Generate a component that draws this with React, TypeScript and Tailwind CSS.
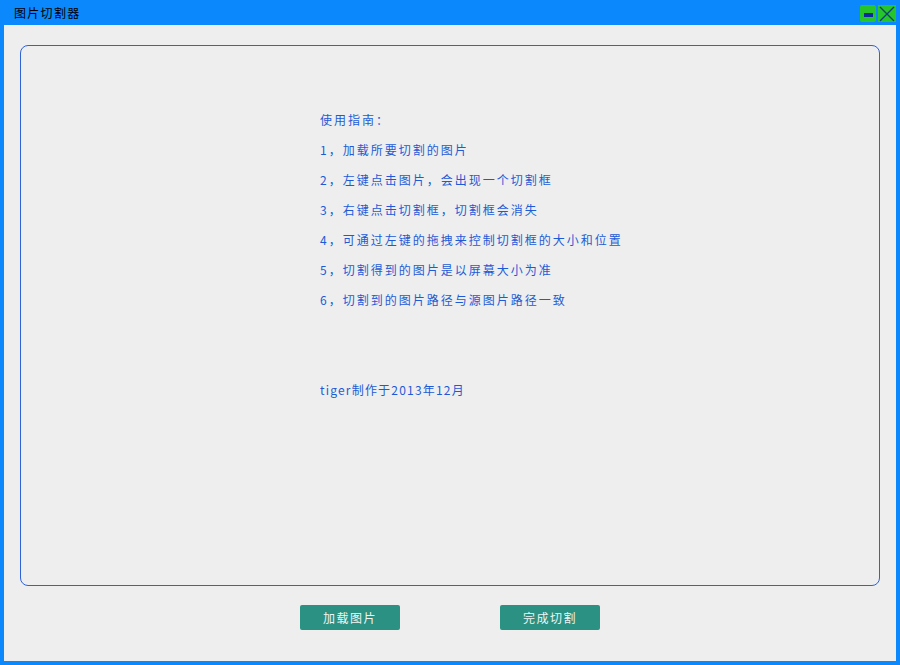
// Image cutter window: blue frame, guide text panel, two action buttons.

const font = { fontFamily: '"Noto Sans CJK SC", "DejaVu Sans", sans-serif' };

const steps = [
  "1，加载所要切割的图片",
  "2，左键点击图片，会出现一个切割框",
  "3，右键点击切割框，切割框会消失",
  "4，可通过左键的拖拽来控制切割框的大小和位置",
  "5，切割得到的图片是以屏幕大小为准",
  "6，切割到的图片路径与源图片路径一致",
];

export default function App() {
  return (
    <div className="flex h-[665px] w-[900px] flex-col bg-[#0a88fc]" style={font}>
      <div className="flex h-[25px] items-center pl-[14px] pr-[4px]">
        <span className="text-[12px] leading-none tracking-[1.3px] text-black">图片切割器</span>
        <div className="ml-auto flex items-center gap-[2px] pt-[2px]">
          <button className="flex h-[17px] w-[16px] items-center justify-center rounded-[2px] bg-[#26c62a]">
            <span className="mt-[3px] h-[4px] w-[9px] bg-[#0b2a9a]" />
          </button>
          <button className="flex h-[17px] w-[18px] items-center justify-center bg-[#26c62a]">
            <svg width="16" height="16" viewBox="0 0 16 16">
              <path d="M1 1L15 15M15 1L1 15" stroke="#0b3f7a" strokeWidth="1.3" />
            </svg>
          </button>
        </div>
      </div>
      <div className="mx-[4px] mb-[4px] flex flex-1 flex-col bg-[#eeeeee] px-[16px] pt-[20px]">
        <div className="flex h-[541px] flex-col rounded-[8px] border border-[#2d62d8] pl-[299px] pt-[66px] text-[12px] tracking-[2px] text-[#1d5bd6]">
          <p className="h-[30px] leading-[16px]">使用指南：</p>
          {steps.map((s) => (
            <p key={s} className="h-[30px] leading-[16px]">
              {s}
            </p>
          ))}
          <p className="mt-[60px] leading-[16px] tracking-[1.2px]">tiger制作于2013年12月</p>
        </div>
        <div className="mt-[19px] flex justify-center gap-[100px]">
          <button className="h-[25px] w-[100px] rounded-[2px] bg-[#2a9183] text-[12px] tracking-[1.5px] text-[#eef6f4]">
            加载图片
          </button>
          <button className="h-[25px] w-[100px] rounded-[2px] bg-[#2a9183] text-[12px] tracking-[1.5px] text-[#eef6f4]">
            完成切割
          </button>
        </div>
      </div>
    </div>
  );
}
